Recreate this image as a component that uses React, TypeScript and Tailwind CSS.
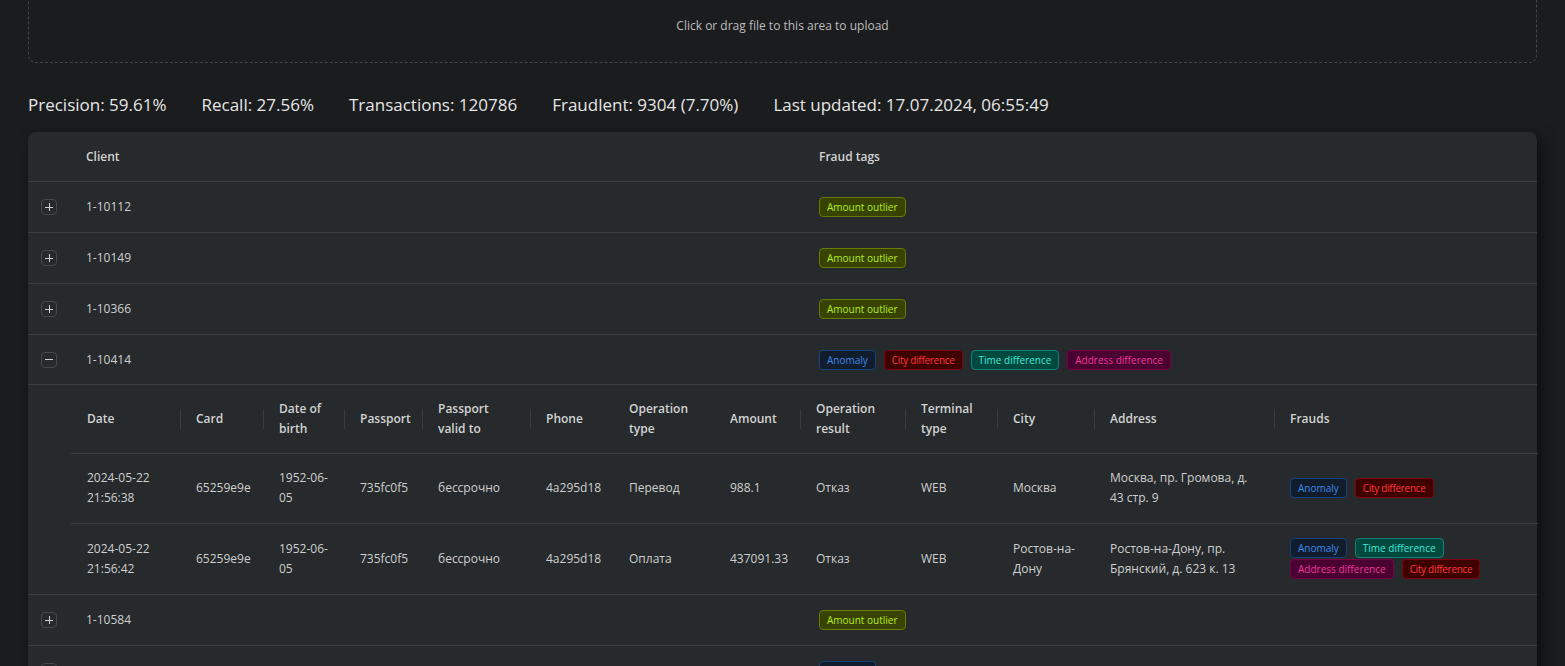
import React from "react";

type TagKind = "amount" | "anomaly" | "city" | "time" | "address";

const tagStyles: Record<TagKind, { label: string; className: string }> = {
  amount: {
    label: "Amount outlier",
    className: "bg-[#394300] border-[#687a00] text-[#b4ec1e]",
  },
  anomaly: {
    label: "Anomaly",
    className: "bg-[#111d2c] border-[#15417e] text-[#3c89e8]",
  },
  city: {
    label: "City difference",
    className: "bg-[#3f0000] border-[#820014] text-[#ff3838] tracking-[-0.3px]",
  },
  time: {
    label: "Time difference",
    className: "bg-[#00493f] border-[#13807a] text-[#3fe8d8]",
  },
  address: {
    label: "Address difference",
    className: "bg-[#4a0030] border-[#7a0045] text-[#f0389c]",
  },
};

const Tag: React.FC<{ kind: TagKind }> = ({ kind }) => {
  const t = tagStyles[kind];
  return (
    <span
      className={`inline-block h-[20px] px-[7px] border rounded-[4px] text-[10px] leading-[18px] whitespace-nowrap ${t.className}`}
    >
      {t.label}
    </span>
  );
};

const ExpandIcon: React.FC<{ open?: boolean }> = ({ open }) => (
  <span className="relative inline-flex w-[16px] h-[16px] rounded-[4px] border border-[#45484a] items-center justify-center">
    <span className="absolute w-[8px] h-px bg-[#d0d0d0]" />
    {!open && <span className="absolute w-px h-[8px] bg-[#d0d0d0]" />}
  </span>
);

const clients: { id: string; tags: TagKind[]; open?: boolean }[] = [
  { id: "1-10112", tags: ["amount"] },
  { id: "1-10149", tags: ["amount"] },
  { id: "1-10366", tags: ["amount"] },
  { id: "1-10414", tags: ["anomaly", "city", "time", "address"], open: true },
  { id: "1-10584", tags: ["amount"] },
  { id: "1-10611", tags: ["anomaly"] },
];

const columns = [
  { title: "Date", width: 109, sep: false },
  { title: "Card", width: 83, sep: true },
  { title: "Date of birth", width: 81, sep: true },
  { title: "Passport", width: 78, sep: true },
  { title: "Passport valid to", width: 108, sep: true },
  { title: "Phone", width: 83, sep: true },
  { title: "Operation type", width: 101, sep: false },
  { title: "Amount", width: 86, sep: false },
  { title: "Operation result", width: 105, sep: true },
  { title: "Terminal type", width: 92, sep: true },
  { title: "City", width: 97, sep: true },
  { title: "Address", width: 180, sep: true },
  { title: "Frauds", width: 264, sep: true },
];

const transactions = [
  {
    date: "2024-05-22 21:56:38",
    card: "65259e9e",
    dob: "1952-06-05",
    passport: "735fc0f5",
    valid: "бессрочно",
    phone: "4a295d18",
    opType: "Перевод",
    amount: "988.1",
    opResult: "Отказ",
    terminal: "WEB",
    city: "Москва",
    address: "Москва, пр. Громова, д. 43 стр. 9",
    frauds: ["anomaly", "city"] as TagKind[],
  },
  {
    date: "2024-05-22 21:56:42",
    card: "65259e9e",
    dob: "1952-06-05",
    passport: "735fc0f5",
    valid: "бессрочно",
    phone: "4a295d18",
    opType: "Оплата",
    amount: "437091.33",
    opResult: "Отказ",
    terminal: "WEB",
    city: "Ростов-на-Дону",
    address: "Ростов-на-Дону, пр. Брянский, д. 623 к. 13",
    frauds: ["anomaly", "time", "address", "city"] as TagKind[],
  },
];

const TransactionsTable: React.FC = () => (
  <table className="w-full table-fixed border-collapse text-[12px] leading-[20px]">
    <colgroup>
      {columns.map((c) => (
        <col key={c.title} style={{ width: c.width }} />
      ))}
    </colgroup>
    <thead>
      <tr className="border-b border-[#3d4042]">
        {columns.map((c) => (
          <th
            key={c.title}
            className="relative h-[68px] px-4 text-left font-semibold text-[#d2d2d2] align-middle"
          >
            {c.sep && (
              <span className="absolute left-0 top-1/2 -translate-y-1/2 w-px h-[20px] bg-[#3a3d3f]" />
            )}
            {c.title}
          </th>
        ))}
      </tr>
    </thead>
    <tbody>
      {transactions.map((t, i) => {
        const last = i === transactions.length - 1;
        return (
          <tr key={t.date} className={last ? "" : "border-b border-[#3d4042]"}>
            {[
              t.date,
              t.card,
              t.dob,
              t.passport,
              t.valid,
              t.phone,
              t.opType,
              t.amount,
              t.opResult,
              t.terminal,
              t.city,
              t.address,
            ].map((v, j) => (
              <td
                key={j}
                className={`${last ? "h-[71px]" : "h-[70px]"} px-4 text-[#cfcfcf] align-middle`}
              >
                {v}
              </td>
            ))}
            <td className="px-4 align-middle">
              <div className="flex flex-wrap gap-x-2 gap-y-px">
                {t.frauds.map((f) => (
                  <Tag key={f} kind={f} />
                ))}
              </div>
            </td>
          </tr>
        );
      })}
    </tbody>
  </table>
);

const App: React.FC = () => {
  return (
    <div
      className="min-h-screen bg-[#1b1c1e] px-[28px] pb-10"
      style={{ fontFamily: '"Open Sans", "Noto Sans", sans-serif' }}
    >
      <div className="-mt-3 h-[75px] rounded-lg border border-dashed border-[#444648] flex items-center justify-center text-[12px] text-[#bdbdbd]">
        Click or drag file to this area to upload
      </div>

      <div className="mt-[28px] mb-[13px] flex gap-[35px] text-[17px] leading-[28px] text-[#e6e6e6]">
        <span>Precision: 59.61%</span>
        <span>Recall: 27.56%</span>
        <span>Transactions: 120786</span>
        <span>Fraudlent: 9304 (7.70%)</span>
        <span>Last updated: 17.07.2024, 06:55:49</span>
      </div>

      <div className="bg-[#262a2c] rounded-t-lg shadow-[4px_4px_14px_rgba(0,0,0,0.55)] text-[12px] text-[#cfcfcf]">
        <div className="flex h-[50px] items-center border-b border-[#3d4042] font-semibold text-[#d2d2d2]">
          <div className="w-[42px]" />
          <div className="flex-1 px-4">Client</div>
          <div className="w-[734px] px-4">Fraud tags</div>
        </div>
        {clients.map((c) => (
          <div key={c.id} className="border-b border-[#3d4042]">
            <div
              className={`flex h-[50px] items-center ${c.open ? "border-b border-[#3d4042]" : ""}`}
            >
              <div className="w-[42px] flex justify-center">
                <ExpandIcon open={c.open} />
              </div>
              <div className="flex-1 px-4">{c.id}</div>
              <div className="w-[734px] px-4 flex gap-2">
                {c.tags.map((t) => (
                  <Tag key={t} kind={t} />
                ))}
              </div>
            </div>
            {c.open && (
              <div className="pl-[43px]">
                <TransactionsTable />
              </div>
            )}
          </div>
        ))}
      </div>
    </div>
  );
};

export default App;
